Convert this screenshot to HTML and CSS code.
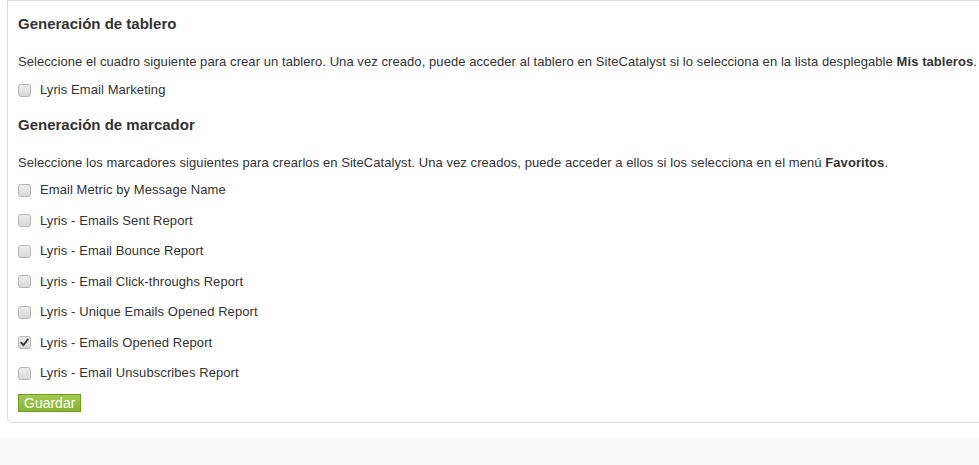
FILE: index.html
```html
<!DOCTYPE html>
<html lang="es">
<head>
<meta charset="utf-8">
<title>Generación de tablero</title>
<link rel="stylesheet" href="styles.css">
</head>
<body>
<div class="page">
  <div class="panel">
    <h2 class="section-title">Generación de tablero</h2>
    <p class="desc">Seleccione el cuadro siguiente para crear un tablero. Una vez creado, puede acceder al tablero en SiteCatalyst si lo selecciona en la lista desplegable <b>Mis tableros</b>.</p>
    <label class="row first"><span class="cb"></span>Lyris Email Marketing</label>

    <h2 class="section-title second">Generación de marcador</h2>
    <p class="desc">Seleccione los marcadores siguientes para crearlos en SiteCatalyst. Una vez creados, puede acceder a ellos si los selecciona en el menú <b>Favoritos</b>.</p>
    <div class="list">
      <label class="row"><span class="cb"></span>Email Metric by Message Name</label>
      <label class="row"><span class="cb"></span>Lyris - Emails Sent Report</label>
      <label class="row"><span class="cb"></span>Lyris - Email Bounce Report</label>
      <label class="row"><span class="cb"></span>Lyris - Email Click-throughs Report</label>
      <label class="row"><span class="cb"></span>Lyris - Unique Emails Opened Report</label>
      <label class="row"><span class="cb checked"><svg viewBox="0 0 13 13" width="13" height="13"><path d="M3.2 6.6 L5.4 9.2 L9.8 3.4" fill="none" stroke="#333" stroke-width="1.8" stroke-linecap="round" stroke-linejoin="round"/></svg></span>Lyris - Emails Opened Report</label>
      <label class="row"><span class="cb"></span>Lyris - Email Unsubscribes Report</label>
    </div>
    <button class="btn-save" type="button">Guardar</button>
  </div>
</div>
</body>
</html>
```

FILE: styles.css
```css
html, body {
  margin: 0;
  padding: 0;
}
body {
  background: #f8f8f8;
  font-family: "Liberation Sans", Arial, sans-serif;
  font-size: 13px;
  color: #333;
  overflow: hidden;
}
.page {
  background: #fff;
  padding: 0 0 15px 7px;
}
.panel {
  margin-right: -12px;
  border: 1px solid #dcdcdc;
  border-radius: 0 0 5px 5px;
  padding: 13px 10px 10px 10px;
}
.section-title {
  margin: 0;
  font-size: 15px;
  font-weight: bold;
  line-height: 20px;
  color: #333;
}
.section-title.second {
  margin-top: 15px;
}
.desc {
  margin: 19px 0 0 0;
  line-height: 18px;
  white-space: nowrap;
  letter-spacing: 0.07px;
}
.row {
  display: flex;
  align-items: center;
  height: 20px;
  line-height: 20px;
  margin-top: 9px;
  letter-spacing: 0.08px;
}
.list {
  display: flex;
  flex-direction: column;
  gap: 10.5px;
  margin-top: 8px;
}
.list .row {
  margin-top: 0;
}
.cb {
  box-sizing: border-box;
  width: 13px;
  height: 13px;
  border: 1px solid #b5b5b5;
  border-radius: 3px;
  background: linear-gradient(#ececec, #d9d9d9);
  margin-right: 9px;
  flex: none;
  display: flex;
  align-items: center;
  justify-content: center;
}
.cb svg {
  display: block;
  margin: -1px;
}
.btn-save {
  display: block;
  margin-top: 11px;
  height: 18px;
  padding: 0 5px;
  border: 1px solid #6f9e21;
  background: linear-gradient(#a2c851, #86b534);
  color: #fff;
  font-family: "Liberation Sans", Arial, sans-serif;
  font-size: 14px;
  line-height: 16px;
  border-radius: 0;
  cursor: pointer;
}
```
